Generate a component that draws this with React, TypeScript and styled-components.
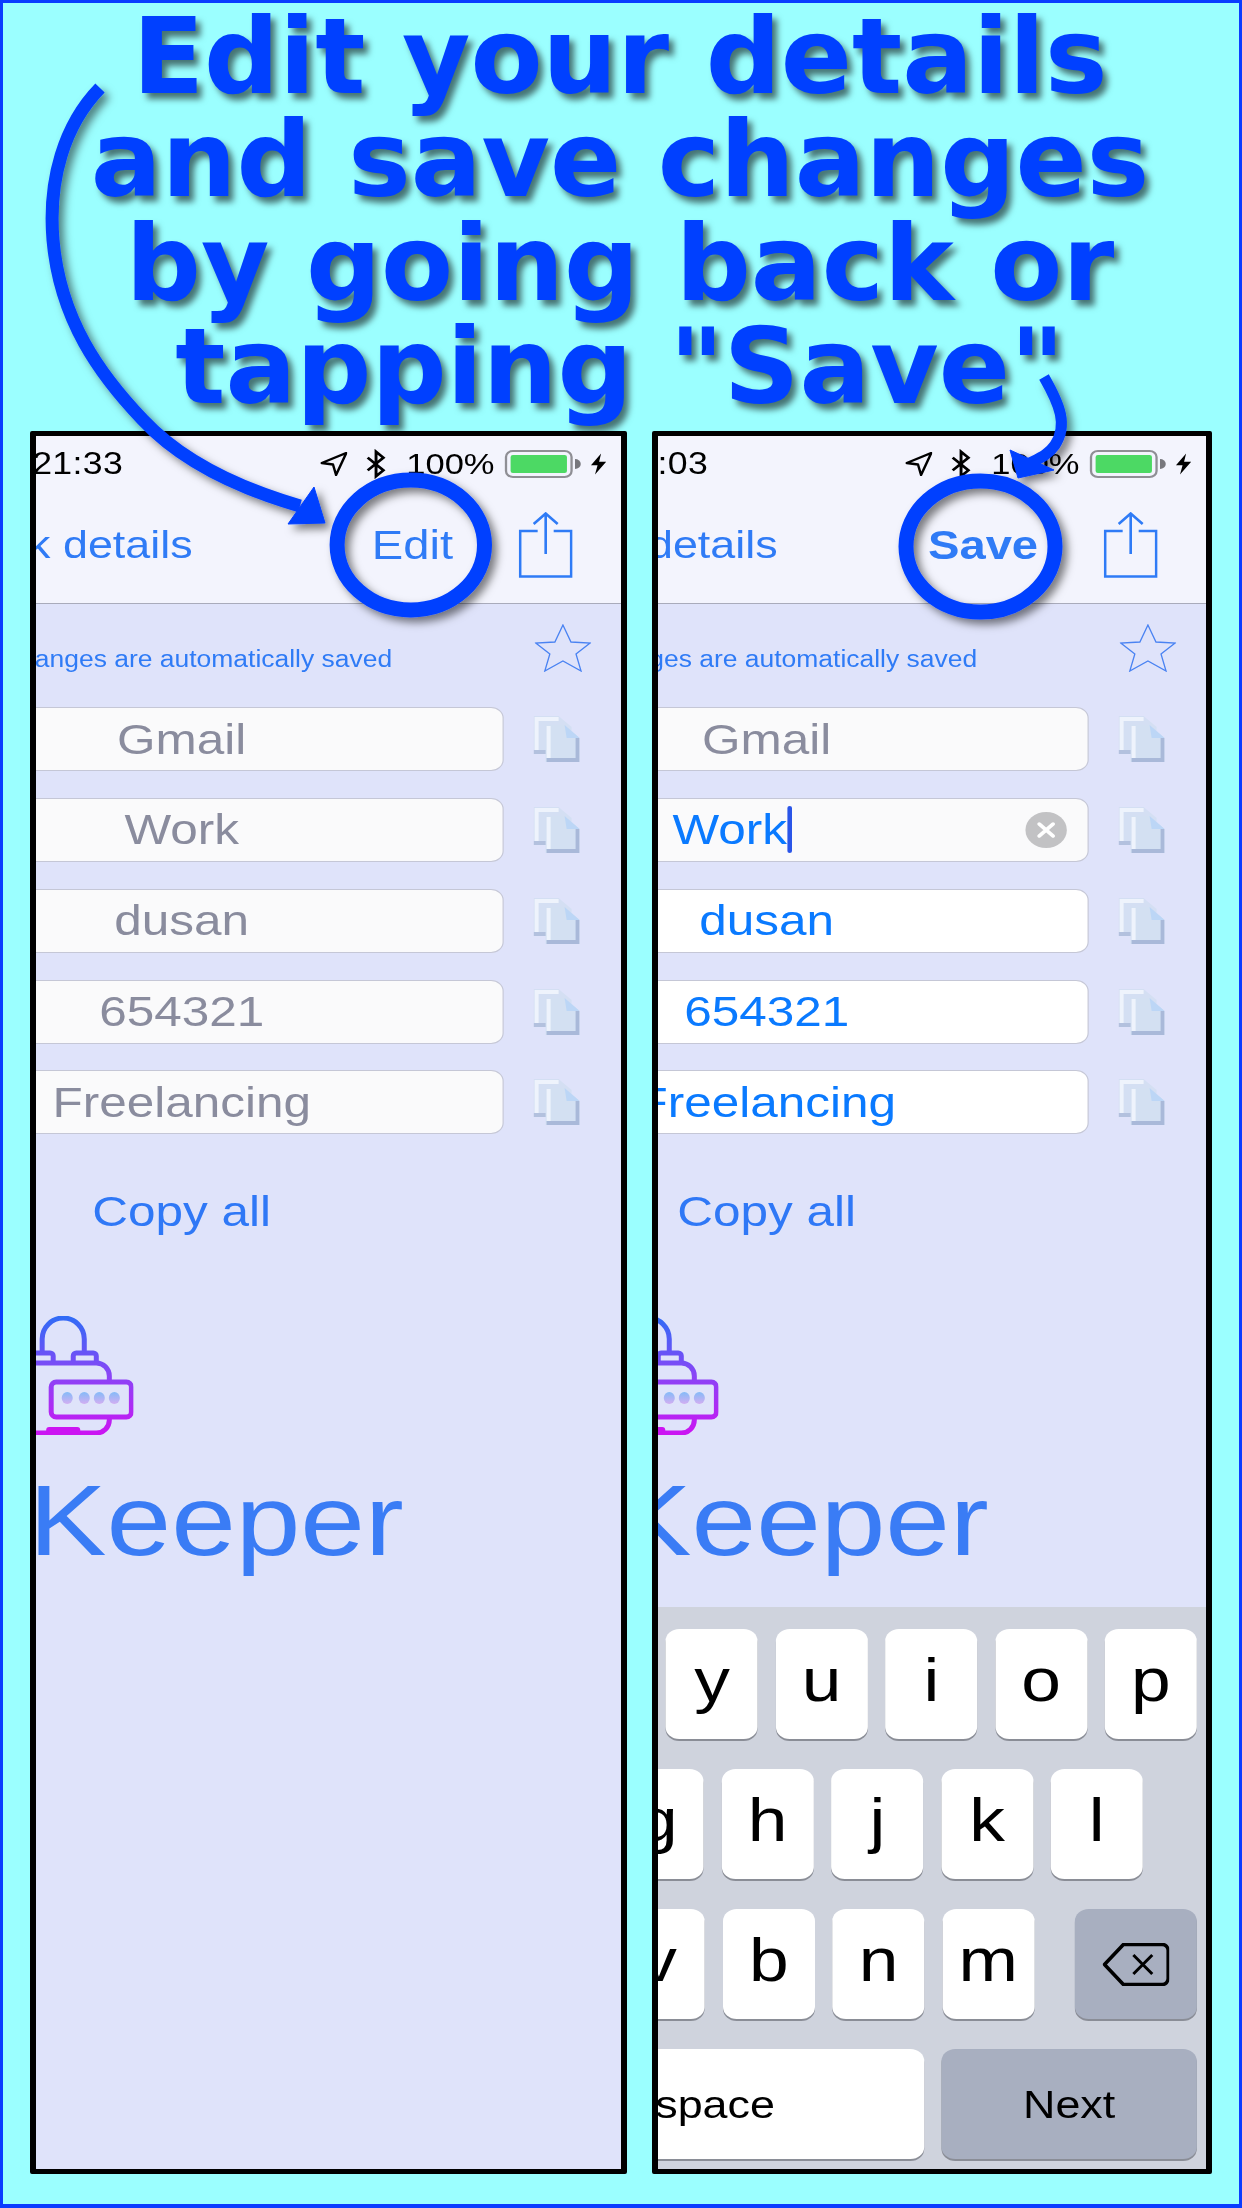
import React from 'react';
import styled, { createGlobalStyle } from 'styled-components';

const Global = createGlobalStyle`
  html, body { margin: 0; padding: 0; background: #9bffff; }
  * { box-sizing: border-box; }
`;

const Page = styled.div`
  position: relative;
  width: 1242px;
  height: 2208px;
  overflow: hidden;
  background: #9bffff;
  border-style: solid;
  border-color: #0a3cff;
  border-width: 3px 3px 4px 3px;
  font-family: 'Liberation Sans', Arial, sans-serif;
`;

const Title = styled.h1`
  margin: 3px 0 0;
  padding-right: 2px;
  text-align: center;
  font-family: 'DejaVu Sans', Verdana, sans-serif;
  font-weight: 700;
  font-size: 105px;
  line-height: 103.3px;
  color: #0040ff;
  text-shadow: 5px 6px 6px rgba(0, 0, 0, 0.55);
`;

const PhoneRow = styled.div`
  display: flex;
  gap: 25px;
  margin-top: 12px;
  padding-left: 27px;
`;

const Phone = styled.div<{ $width: number }>`
  display: flex;
  justify-content: flex-end;
  width: ${(p) => p.$width}px;
  height: 1743px;
  overflow: hidden;
  border-style: solid;
  border-color: #000;
  border-width: 5px 6px;
  border-radius: 2px;
  background: #dfe3fa;
`;

const Screen = styled.div`
  flex: 0 0 765px;
  width: 765px;
  height: 100%;
  display: flex;
  flex-direction: column;
  transform: scaleX(1.15);
  transform-origin: right top;
  background: #dfe3fa;
`;

const Header = styled.header`
  flex: 0 0 168px;
  background: #f3f4fd;
  border-bottom: 1px solid #a9abbb;
  display: flex;
  flex-direction: column;
`;

const StatusBar = styled.div`
  height: 64px;
  display: flex;
  align-items: center;
  padding: 0 12px 8px 253px;
  color: #000;
  font-size: 30px;
`;

const Time = styled.span`
  font-size: 31px;
  letter-spacing: 0.3px;
  margin-right: auto;
`;

const StatusIcons = styled.div`
  display: flex;
  align-items: center;
`;

const LocationIcon = styled.svg`
  width: 24px;
  height: 24px;
  margin-right: 15px;
`;

const BluetoothIcon = styled.svg`
  width: 20px;
  height: 30px;
  margin-right: 16px;
`;

const Percent = styled.span`
  margin-right: 9px;
`;

const Battery = styled.div`
  width: 59px;
  height: 28px;
  padding: 3px;
  border: 2.5px solid #8f8f95;
  border-radius: 7px;
`;

const BatteryFill = styled.div`
  height: 100%;
  border-radius: 2px;
  background: #4cd964;
`;

const BatteryNub = styled.div`
  width: 5px;
  height: 10px;
  margin: 0 8px 0 2px;
  background: #77777d;
  border-radius: 0 5px 5px 0;
`;

const BoltIcon = styled.svg`
  width: 15px;
  height: 24px;
`;

const NavBar = styled.div`
  flex: 1;
  display: flex;
  align-items: center;
  padding: 0 42px 13px 180px;
  color: #2f7bf6;
  font-size: 39px;
`;

const BackLabel = styled.span`
  margin-right: auto;
`;

const NavAction = styled.span<{ $bold?: boolean }>`
  margin-right: 57px;
  font-size: 41px;
  font-weight: ${(p) => (p.$bold ? 700 : 400)};
`;

const ShareIcon = styled.svg`
  width: 47px;
  height: 66px;
`;

const Content = styled.main`
  flex: 1;
  min-height: 0;
  display: flex;
  flex-direction: column;
  padding-top: 20px;
  overflow: hidden;
`;

const NoteRow = styled.div`
  height: 83px;
  display: flex;
  justify-content: flex-end;
  padding-right: 26px;
`;

const Note = styled.span`
  margin: 21px 124px 0 0;
  font-size: 23px;
  line-height: 28px;
  color: #2f7bf6;
`;

const StarIcon = styled.svg`
  width: 49px;
  height: 48px;
`;

const FieldList = styled.div`
  display: flex;
  flex-direction: column;
  gap: 26.8px;
`;

const FieldRow = styled.div`
  display: flex;
  align-items: center;
  justify-content: flex-end;
  gap: 26px;
  padding-right: 36px;
`;

const Field = styled.div<{ $tone: 'idle' | 'focus' | 'edit' }>`
  position: relative;
  flex: 0 0 560px;
  height: 64px;
  display: flex;
  align-items: center;
  justify-content: ${(p) => (p.$tone === 'focus' ? 'flex-start' : 'center')};
  padding-left: ${(p) => (p.$tone === 'focus' ? '197px' : '0')};
  border: 1px solid #c5c7d6;
  border-radius: 11px;
  background: ${(p) => (p.$tone === 'edit' ? '#ffffff' : '#fafafb')};
  color: ${(p) => (p.$tone === 'idle' ? '#8a8c9e' : '#0a7aff')};
  font-size: 43px;
`;

const Caret = styled.span`
  width: 4px;
  height: 47px;
  border-radius: 2px;
  background: #2a55e8;
`;

const ClearButton = styled.span`
  position: absolute;
  right: 18px;
  top: 13px;
  width: 36px;
  height: 36px;
  border-radius: 50%;
  background: #c2c2c4;
  display: flex;
  align-items: center;
  justify-content: center;
`;

const ClearIcon = styled.svg`
  width: 18px;
  height: 18px;
`;

const CopyIcon = styled.svg`
  width: 40px;
  height: 46px;
`;

const CopyAll = styled.div`
  width: 560px;
  margin: 52px 0 0 103px;
  text-align: center;
  font-size: 43px;
  line-height: 50px;
  color: #2f78f6;
`;

const Logo = styled.svg`
  align-self: flex-end;
  flex: none;
  width: 102px;
  height: 119px;
  margin: 80px 424px 0 0;
`;

const Wordmark = styled.div`
  align-self: flex-end;
  margin: 34px 189px 0 0;
  font-size: 101px;
  line-height: 103px;
  color: #3a7cf5;
`;

const Keyboard = styled.div`
  flex: 0 0 562px;
  display: flex;
  flex-direction: column;
  gap: 30px;
  padding: 22px 8px 0 0;
  background: #cfd3dd;
`;

const KeyRow = styled.div<{ $trail?: number }>`
  display: flex;
  justify-content: flex-end;
  gap: 15.4px;
  height: 110px;
  padding-right: ${(p) => p.$trail ?? 0}px;
`;

const Key = styled.div<{ $width?: number; $special?: boolean; $small?: boolean; $gapLeft?: number }>`
  flex: 0 0 ${(p) => p.$width ?? 80}px;
  display: flex;
  align-items: center;
  justify-content: center;
  margin-left: ${(p) => p.$gapLeft ?? 0}px;
  padding-bottom: ${(p) => (p.$small ? 0 : 8)}px;
  border-radius: 12px;
  background: ${(p) => (p.$special ? '#a8afc0' : '#ffffff')};
  box-shadow: 0 2px 0 #8a8d96;
  color: #000;
  font-size: ${(p) => (p.$small ? 39 : 62)}px;
  line-height: 1;
`;

const DeleteIcon = styled.svg`
  width: 58px;
  height: 43px;
`;

const Overlay = styled.svg`
  position: absolute;
  left: -3px;
  top: -3px;
  width: 1242px;
  height: 2208px;
  pointer-events: none;
`;

const rowOne = ['q', 'w', 'e', 'r', 't', 'y', 'u', 'i', 'o', 'p'];
const rowTwo = ['a', 's', 'd', 'f', 'g', 'h', 'j', 'k', 'l'];
const rowThree = ['z', 'x', 'c', 'v', 'b', 'n', 'm'];

const Copy = () => (
  <CopyIcon viewBox="0 0 46 46" preserveAspectRatio="none">
    <path d="M0 0 H25 L38 11 V38 H0 Z" fill="#d4dff3" />
    <path d="M1 1 H25 V5 H5 V34 H1 Z" fill="#eef3fc" />
    <path d="M0 34 H13 V38 H0 Z" fill="#b3c1de" />
    <path d="M12 9 H31 L46 22 V46 H12 Z" fill="#d3e0f2" />
    <path d="M31 9 L46 22 H33 Z" fill="#bcd6f6" />
    <path d="M13 10 H17 V42 H13 Z" fill="#eef3fc" />
    <path d="M13 42 H42 V22 H46 V46 H13 Z" fill="#a9b9d9" />
  </CopyIcon>
);

type PhoneProps = { width: number; editing: boolean; time: string; action: string };

const PhoneScreen = ({ width, editing, time, action }: PhoneProps) => {
  const values = ['Gmail', 'Work', 'dusan', '654321', 'Freelancing'];
  return (
    <Phone $width={width}>
      <Screen>
        <Header>
          <StatusBar>
            <Time>{time}</Time>
            <StatusIcons>
              <LocationIcon viewBox="0 0 27 24" preserveAspectRatio="none">
                <path d="M26 1 L2 11 L13 12.5 L16 23 Z" fill="none" stroke="#000" strokeWidth="2.4" strokeLinejoin="round" />
              </LocationIcon>
              <BluetoothIcon viewBox="0 0 22 30">
                <path d="M3 8 L18 22 L11 28.5 V1.5 L18 8 L3 22" fill="none" stroke="#000" strokeWidth="2.8" />
              </BluetoothIcon>
              <Percent>100%</Percent>
              <Battery>
                <BatteryFill />
              </Battery>
              <BatteryNub />
              <BoltIcon viewBox="0 0 17 24">
                <path d="M11 0 L1 13.5 H7.5 L5 24 L16 9.5 H9 Z" fill="#000" />
              </BoltIcon>
            </StatusIcons>
          </StatusBar>
          <NavBar>
            <BackLabel>Bank details</BackLabel>
            <NavAction $bold={editing}>{action}</NavAction>
            <ShareIcon viewBox="0 0 54 66" preserveAspectRatio="none" fill="none" stroke="#2f7bf6" strokeWidth="2.6">
              <path d="M19 19 H1.5 V64.5 H52.5 V19 H35" />
              <path d="M27 42 V2 M15 12 L27 1.5 L39 12" />
            </ShareIcon>
          </NavBar>
        </Header>
        <Content>
          <NoteRow>
            <Note>Changes are automatically saved</Note>
            <StarIcon viewBox="0 0 56 48" preserveAspectRatio="none">
              <path
                d="M28 1 L36 18 L55 19 L41 30 L46 47 L28 37 L10 47 L15 30 L1 19 L20 18 Z"
                fill="none"
                stroke="#4a83f2"
                strokeWidth="1.3"
              />
            </StarIcon>
          </NoteRow>
          <FieldList>
            {values.map((value, i) => {
              const tone = !editing || i === 0 ? 'idle' : i === 1 ? 'focus' : 'edit';
              return (
                <FieldRow key={value}>
                  <Field $tone={tone}>
                    {value}
                    {tone === 'focus' && (
                      <>
                        <Caret />
                        <ClearButton>
                          <ClearIcon viewBox="0 0 18 18">
                            <path d="M3 3 L15 15 M15 3 L3 15" stroke="#fff" strokeWidth="3.4" strokeLinecap="round" />
                          </ClearIcon>
                        </ClearButton>
                      </>
                    )}
                  </Field>
                  <Copy />
                </FieldRow>
              );
            })}
          </FieldList>
          <CopyAll>Copy all</CopyAll>
          <Logo viewBox="0 0 117 119" preserveAspectRatio="none">
            <defs>
              <linearGradient id={`lock-${width}`} gradientUnits="userSpaceOnUse" x1="0" y1="0" x2="0" y2="119">
                <stop offset="0" stopColor="#2f6cf6" />
                <stop offset="0.5" stopColor="#8a45f6" />
                <stop offset="1" stopColor="#cc14f2" />
              </linearGradient>
              <linearGradient id={`dots-${width}`} gradientUnits="userSpaceOnUse" x1="0" y1="76" x2="0" y2="88">
                <stop offset="0" stopColor="#84bbf8" />
                <stop offset="1" stopColor="#d2aef2" />
              </linearGradient>
            </defs>
            <g fill="none" stroke={`url(#lock-${width})`} strokeWidth="5">
              <path d="M26 37 V23 a21 21 0 0 1 42 0 V37" />
              <path d="M57 47 V40 a3 3 0 0 1 3 -3 H77 a3 3 0 0 1 3 3 V47" />
              <path d="M14 47 V40 a3 3 0 0 1 3 -3 H34 a3 3 0 0 1 3 3 V47" />
              <path d="M0 61 a14 14 0 0 1 14 -14 H80 a13 13 0 0 1 13 13 V65" />
              <path d="M93 101 V104 a13 13 0 0 1 -13 13 H14 a14 14 0 0 1 -14 -14 V61" />
              <rect x="35" y="66" width="80" height="35" rx="5" />
            </g>
            <path d="M30 119 V114 a3 3 0 0 1 3 -3 H61 a3 3 0 0 1 3 3 V119 Z" fill="#cc14f2" />
            <g fill={`url(#dots-${width})`}>
              <ellipse cx="51" cy="82" rx="5.5" ry="6" />
              <ellipse cx="68" cy="82" rx="5.5" ry="6" />
              <ellipse cx="83" cy="82" rx="5.5" ry="6" />
              <ellipse cx="98" cy="82" rx="5.5" ry="6" />
            </g>
          </Logo>
          <Wordmark>Keeper</Wordmark>
        </Content>
        {editing && (
          <Keyboard>
            <KeyRow>
              {rowOne.map((k) => (
                <Key key={k}>{k}</Key>
              ))}
            </KeyRow>
            <KeyRow $trail={47}>
              {rowTwo.map((k) => (
                <Key key={k}>{k}</Key>
              ))}
            </KeyRow>
            <KeyRow>
              {rowThree.map((k) => (
                <Key key={k}>{k}</Key>
              ))}
              <Key $width={106} $special $small $gapLeft={20}>
                <DeleteIcon viewBox="0 0 67 43" preserveAspectRatio="none">
                  <path
                    d="M21 1.5 H60 a6 6 0 0 1 6 6 V35.5 a6 6 0 0 1 -6 6 H21 L2 21.5 Z"
                    fill="none"
                    stroke="#000"
                    strokeWidth="3.6"
                    strokeLinejoin="round"
                  />
                  <path d="M31 12 L50 31 M50 12 L31 31" stroke="#000" strokeWidth="3" />
                </DeleteIcon>
              </Key>
            </KeyRow>
            <KeyRow>
              <Key $width={363} $small>
                space
              </Key>
              <Key $width={222} $special $small>
                Next
              </Key>
            </KeyRow>
          </Keyboard>
        )}
      </Screen>
    </Phone>
  );
};

export default function App() {
  return (
    <>
      <Global />
      <Page>
        <Title>
          Edit your details
          <br />
          and save changes
          <br />
          by going back or
          <br />
          tapping "Save"
        </Title>
        <PhoneRow>
          <PhoneScreen width={597} editing={false} time="21:33" action="Edit" />
          <PhoneScreen width={560} editing time="21:03" action="Save" />
        </PhoneRow>
        <Overlay viewBox="0 0 1242 2208">
          <defs>
            <filter id="mark-shadow" x="-20%" y="-20%" width="150%" height="150%">
              <feDropShadow dx="5" dy="5" stdDeviation="4" floodColor="#000" floodOpacity="0.5" />
            </filter>
          </defs>
          <g filter="url(#mark-shadow)" fill="none" stroke="#0040ff">
            <ellipse cx="410.8" cy="545" rx="73.7" ry="65" strokeWidth="15" />
            <ellipse cx="980.5" cy="546.5" rx="74.5" ry="65.5" strokeWidth="15" />
            <path d="M100 88 C64 125 48 180 53 240 C60 320 100 375 143 420 C185 465 245 490 300 506" strokeWidth="13" />
            <path d="M314 487 L288 524 L325 523 Z" fill="#0040ff" strokeWidth="1" />
            <path d="M1044 377 C1060 405 1068 425 1055 445 C1048 455 1040 458 1030 463" strokeWidth="11" />
            <path d="M1010 450 L1054 470 L1018 478 Z" fill="#0040ff" strokeWidth="1" />
          </g>
        </Overlay>
      </Page>
    </>
  );
}
